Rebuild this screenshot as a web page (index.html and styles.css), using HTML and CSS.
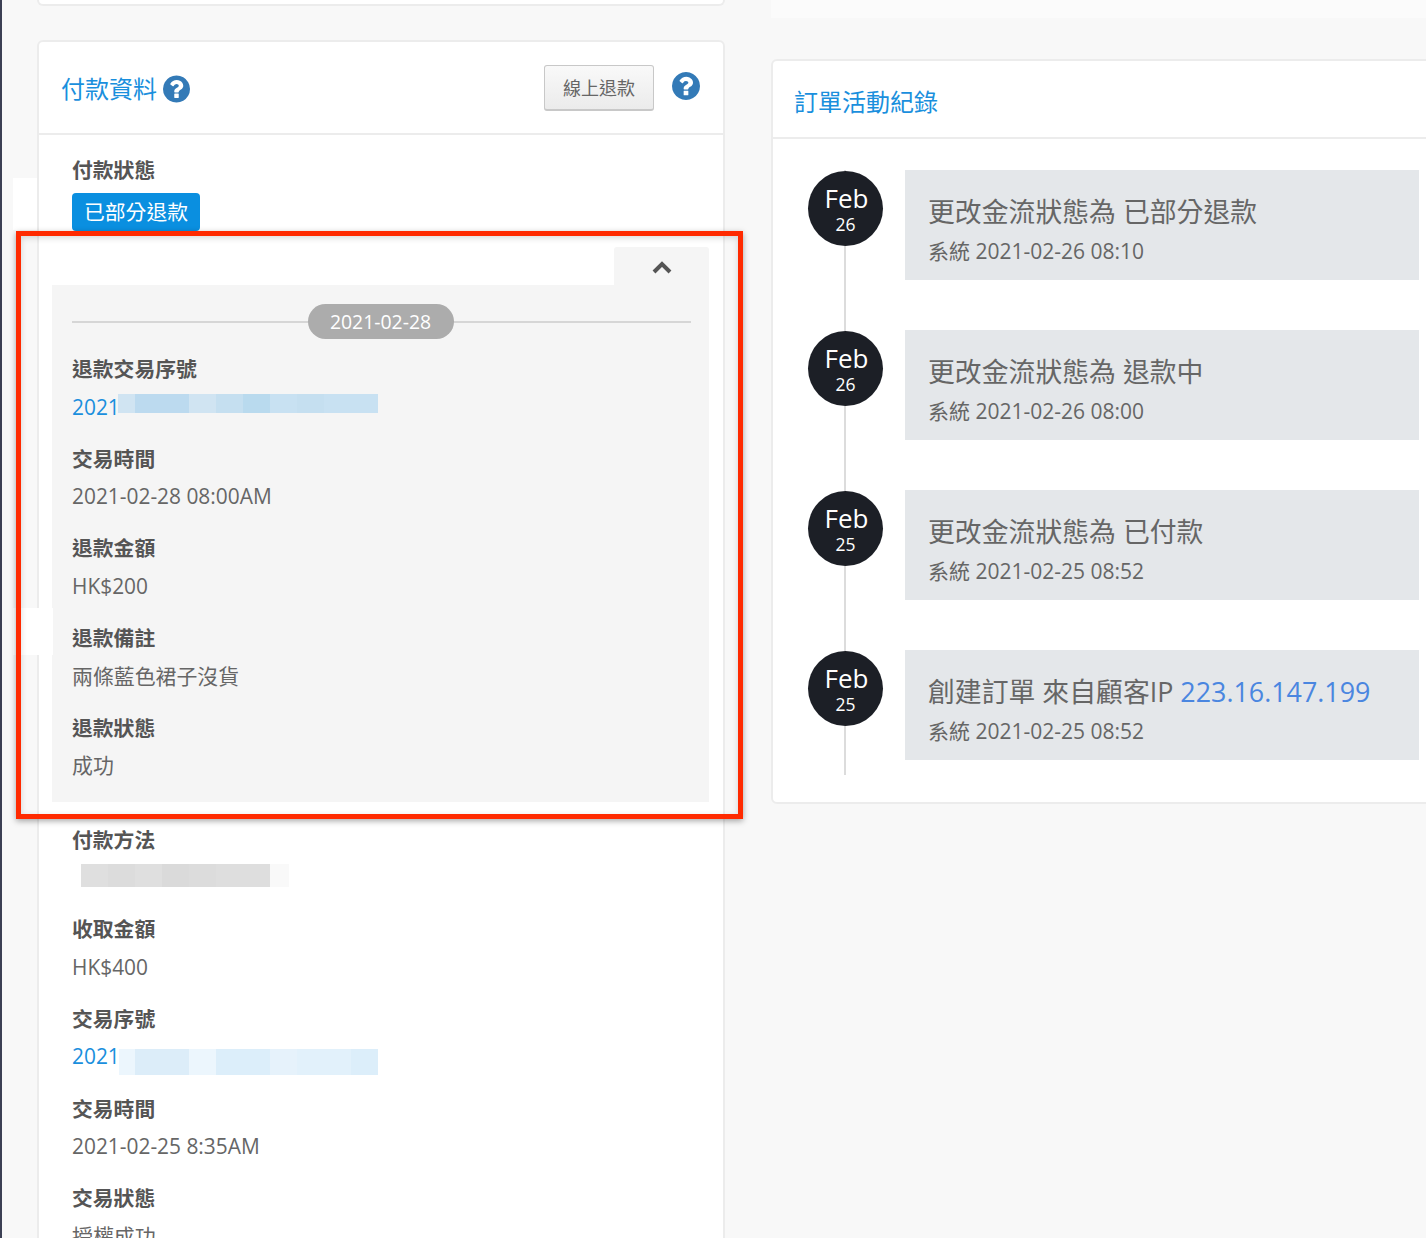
FILE: index.html
```html
<!DOCTYPE html>
<html lang="zh-Hant">
<head>
    <meta charset="UTF-8">
    <meta name="viewport" content="width=device-width, initial-scale=1.0">
    <title>訂單詳情</title>
    <link rel="stylesheet" href="styles.css">
</head>
<body>
    <div class="page">
        <div class="col-left">
            <div class="stub-left"></div>
            <div class="card">
                <div class="card-head">
                    <div class="head-title">
                        <h2>付款資料</h2>
                        <svg class="help help-small" viewBox="128 128 1536 1536"><path d="M1024 1376v-192q0-14-9-23t-23-9h-192q-14 0-23 9t-9 23v192q0 14 9 23t23 9h192q14 0 23-9t9-23zm256-672q0-88-55.5-163t-138.5-116-170-41q-243 0-371 213-15 24 8 42l132 100q7 6 19 6 16 0 25-12 53-68 86-92 34-24 86-24 48 0 85.5 26t37.5 59q0 38-20 61t-68 45q-63 28-115.5 86.5t-52.5 125.5v36q0 14 9 23t23 9h192q14 0 23-9t9-23q0-19 21.5-49.5t54.5-49.5q32-18 49-28.5t46-35 44.5-48 28-60.5 12.5-81zm384 192q0 209-103 385.5t-279.5 279.5-385.5 103-385.5-103-279.5-279.5-103-385.5 103-385.5 279.5-279.5 385.5-103 385.5 103 279.5 279.5 103 385.5z"/></svg>
                    </div>
                    <button class="btn-refund">線上退款</button>
                    <svg class="help help-top" viewBox="128 128 1536 1536"><path d="M1024 1376v-192q0-14-9-23t-23-9h-192q-14 0-23 9t-9 23v192q0 14 9 23t23 9h192q14 0 23-9t9-23zm256-672q0-88-55.5-163t-138.5-116-170-41q-243 0-371 213-15 24 8 42l132 100q7 6 19 6 16 0 25-12 53-68 86-92 34-24 86-24 48 0 85.5 26t37.5 59q0 38-20 61t-68 45q-63 28-115.5 86.5t-52.5 125.5v36q0 14 9 23t23 9h192q14 0 23-9t9-23q0-19 21.5-49.5t54.5-49.5q32-18 49-28.5t46-35 44.5-48 28-60.5 12.5-81zm384 192q0 209-103 385.5t-279.5 279.5-385.5 103-385.5-103-279.5-279.5-103-385.5 103-385.5 279.5-279.5 385.5-103 385.5 103 279.5 279.5 103 385.5z"/></svg>
                </div>
                <div class="card-body">
                    <div class="status">
                        <div class="label">付款狀態</div>
                        <span class="badge">已部分退款</span>
                    </div>

                    <div class="refund-tab">
                        <svg class="chevron" viewBox="0 0 20 13"><polyline points="2,11 10,3 18,11"/></svg>
                    </div>
                    <div class="refund-panel">
                        <div class="date-line"><span class="date-pill">2021-02-28</span></div>
                        <div class="field">
                            <div class="label">退款交易序號</div>
                            <div class="value link">2021<span class="mosaic mosaic-refund"><i class="c1"></i><i class="c2"></i><i class="c2"></i><i class="c1"></i><i class="c3"></i><i class="c4"></i><i class="c5"></i><i class="c3"></i><i class="c5"></i><i class="c5"></i></span></div>
                        </div>
                        <div class="field">
                            <div class="label">交易時間</div>
                            <div class="value">2021-02-28 08:00AM</div>
                        </div>
                        <div class="field">
                            <div class="label">退款金額</div>
                            <div class="value">HK$200</div>
                        </div>
                        <div class="field">
                            <div class="label">退款備註</div>
                            <div class="value">兩條藍色裙子沒貨</div>
                        </div>
                        <div class="field">
                            <div class="label">退款狀態</div>
                            <div class="value">成功</div>
                        </div>
                    </div>

                    <div class="field">
                        <div class="label">付款方法</div>
                        <div class="value"><span class="mosaic mosaic-method"><i class="g1"></i><i class="g2"></i><i class="g1"></i><i class="g3"></i><i class="g2"></i><i class="g4"></i><i class="g5"></i></span></div>
                    </div>
                    <div class="field">
                        <div class="label">收取金額</div>
                        <div class="value">HK$400</div>
                    </div>
                    <div class="field">
                        <div class="label">交易序號</div>
                        <div class="value link">2021<span class="mosaic mosaic-trade"><i class="l1"></i><i class="l2"></i><i class="l2"></i><i class="l1"></i><i class="l3"></i><i class="l3"></i><i class="l4"></i><i class="l5"></i><i class="l5"></i><i class="l3"></i></span></div>
                    </div>
                    <div class="field">
                        <div class="label">交易時間</div>
                        <div class="value">2021-02-25 8:35AM</div>
                    </div>
                    <div class="field">
                        <div class="label">交易狀態</div>
                        <div class="value">授權成功</div>
                    </div>
                </div>
            </div>
        </div>

        <div class="col-right">
            <div class="stub-right"></div>
            <div class="card card-log">
                <div class="log-head"><h2>訂單活動紀錄</h2></div>
                <div class="timeline">
                    <div class="event">
                        <div class="event-date"><span class="month">Feb</span><span class="day">26</span></div>
                        <div class="event-box">
                            <div class="event-title">更改金流狀態為 已部分退款</div>
                            <div class="event-meta">系統 2021-02-26 08:10</div>
                        </div>
                    </div>
                    <div class="event">
                        <div class="event-date"><span class="month">Feb</span><span class="day">26</span></div>
                        <div class="event-box">
                            <div class="event-title">更改金流狀態為 退款中</div>
                            <div class="event-meta">系統 2021-02-26 08:00</div>
                        </div>
                    </div>
                    <div class="event">
                        <div class="event-date"><span class="month">Feb</span><span class="day">25</span></div>
                        <div class="event-box">
                            <div class="event-title">更改金流狀態為 已付款</div>
                            <div class="event-meta">系統 2021-02-25 08:52</div>
                        </div>
                    </div>
                    <div class="event">
                        <div class="event-date"><span class="month">Feb</span><span class="day">25</span></div>
                        <div class="event-box">
                            <div class="event-title">創建訂單 來自顧客IP <a class="ip">223.16.147.199</a></div>
                            <div class="event-meta">系統 2021-02-25 08:52</div>
                        </div>
                    </div>
                </div>
            </div>
        </div>

        <!-- marks drawn on top of the screenshot -->
        <div class="patch patch-a"></div>
        <div class="patch patch-b"></div>
        <div class="red-frame"></div>
    </div>
</body>
</html>
```

FILE: styles.css
```css
* {
    box-sizing: border-box;
}

body {
    margin: 0;
    font-family: "Open Sans", "Noto Sans CJK TC", sans-serif;
    color: #666;
    background-color: #f8f8f8;
}

.page {
    position: relative;
    display: flex;
    height: 1238px;
    overflow: hidden;
    border-left: 2px solid #3c4054;
}

.col-left {
    width: 688px;
    margin-left: 35px;
    flex-shrink: 0;
}

.col-right {
    flex: 1;
    min-width: 0;
    margin-left: 46px;
}

.stub-left {
    height: 6px;
    margin-bottom: 34px;
    background-color: white;
    border: 2px solid #ececec;
    border-top: none;
    border-radius: 0 0 6px 6px;
}

.stub-right {
    height: 18px;
    margin-bottom: 41px;
    background-color: #fbfbfb;
}

.card {
    background-color: white;
    border: 2px solid #ececec;
    border-radius: 6px;
}

.card-log {
    margin-right: -8px;
}

/* payment card */
.card-head {
    display: flex;
    align-items: center;
    height: 93px;
    padding: 0 23px 0 22px;
    border-bottom: 2px solid #ececec;
}

.head-title {
    display: flex;
    align-items: center;
    flex: 1;
    padding-top: 3px;
}

h2 {
    margin: 0;
    font-size: 24px;
    font-weight: 400;
    line-height: 32px;
    color: #1a8fdd;
}

.help {
    fill: #337ab7;
}

.help-small {
    width: 27px;
    height: 28px;
    margin-left: 6px;
}

.help-top {
    width: 28px;
    height: 28px;
    margin: 0 0 4px 18px;
}

.btn-refund {
    width: 110px;
    height: 46px;
    margin-bottom: -1px;
    padding: 0 0 2px;
    font-family: inherit;
    font-size: 18px;
    color: #666;
    background: linear-gradient(#f9f9f9, #ebebeb);
    border: 1px solid #c8c8c8;
    border-bottom-width: 2px;
    border-radius: 3px;
}

.card-body {
    padding: 20px 14px 0 33px;
}

.label {
    font-size: 20.8px;
    font-weight: 700;
    line-height: 30px;
    color: #555;
}

.status .label {
    margin-bottom: 8px;
}

.badge {
    display: block;
    width: 128px;
    height: 38px;
    font-size: 20.8px;
    line-height: 38px;
    text-align: center;
    color: white;
    background-color: #0a8fe0;
    border-radius: 4px;
}

.field {
    height: 89.7px;
}

.value {
    display: flex;
    margin-top: 7.5px;
    font-size: 20.9px;
    line-height: 30px;
    color: #666;
}

.link {
    color: #1a8fdd;
}

/* refund panel */
.refund-tab {
    display: flex;
    justify-content: center;
    width: 95px;
    height: 38px;
    margin: 16px 0 0 542px;
    padding-top: 14px;
    background-color: #f5f5f5;
    border-radius: 3px 3px 0 0;
}

.chevron {
    width: 20px;
    height: 13px;
    fill: none;
    stroke: #555;
    stroke-width: 4;
}

.refund-panel {
    width: 657px;
    height: 517px;
    margin: 0 0 22.5px -20px;
    padding: 19px 18px 0 20px;
    background-color: #f5f5f5;
}

.date-line {
    display: flex;
    justify-content: center;
    margin-bottom: 15px;
    background: linear-gradient(#d6d6d6, #d6d6d6) center / 100% 2px no-repeat;
}

.date-pill {
    width: 146px;
    height: 35px;
    margin-right: 2px;
    font-size: 19.4px;
    line-height: 35px;
    text-align: center;
    color: white;
    background-color: #acacac;
    border-radius: 18px;
}

/* pixelated parts of the screenshot */
.mosaic {
    display: flex;
}

.mosaic i {
    display: block;
    width: 27px;
}

.mosaic-refund {
    height: 19px;
    margin: 2.5px 0 0 -2px;
}

.mosaic-refund i:first-child {
    width: 17px;
}

.mosaic-trade {
    height: 26px;
    margin: 7.5px 0 0 -1px;
}

.mosaic-trade i:first-child {
    width: 16px;
}

.mosaic-method {
    height: 23px;
    margin: 1.5px 0 0 9px;
}

.mosaic-method .g4 {
    width: 54px;
}

.mosaic-method .g5 {
    width: 19px;
}

.c1 { background-color: #d0e4f2; }
.c2 { background-color: #bcdaef; }
.c3 { background-color: #c5dff0; }
.c4 { background-color: #b9daee; }
.c5 { background-color: #c8e1f2; }

.l1 { background-color: #ecf6fd; }
.l2 { background-color: #dcedf9; }
.l3 { background-color: #dceefa; }
.l4 { background-color: #e6f2fb; }
.l5 { background-color: #e2f1fb; }

.g1 { background-color: #dfdfdf; }
.g2 { background-color: #dcdcdc; }
.g3 { background-color: #dadada; }
.g4 { background-color: #dedede; }
.g5 { background-color: #f9f9f9; }

/* activity log */
.log-head {
    display: flex;
    align-items: center;
    height: 78px;
    padding: 5px 0 0 21px;
    border-bottom: 2px solid #ececec;
}

.timeline {
    position: relative;
    display: flex;
    flex-direction: column;
    gap: 50px;
    padding: 31px 0 42px 35px;
}

.timeline::before {
    content: "";
    position: absolute;
    left: 71px;
    top: 31px;
    bottom: 27px;
    width: 2px;
    background-color: #dcdcdc;
}

.event {
    position: relative;
    display: flex;
    gap: 22px;
}

.event-date {
    display: flex;
    flex-direction: column;
    align-items: center;
    flex-shrink: 0;
    width: 75px;
    height: 75px;
    margin-top: 1px;
    padding-top: 11px;
    color: white;
    background-color: #1c1f26;
    border-radius: 50%;
}

.month {
    padding-left: 2px;
    font-size: 26px;
    line-height: 32px;
}

.day {
    font-size: 17.5px;
    line-height: 20px;
}

.event-box {
    width: 514px;
    height: 110px;
    padding: 24px 23px 0;
    background-color: #e4e7ea;
}

.event-title {
    font-size: 26.85px;
    line-height: 36px;
    color: #666;
}

.ip {
    color: #4a86e0;
}

.event-meta {
    margin-top: 6px;
    font-size: 21px;
    line-height: 30px;
    color: #666;
}

/* annotation marks */
.patch {
    position: absolute;
    background-color: white;
}

.patch-a {
    left: 11px;
    top: 178px;
    width: 24px;
    height: 52px;
}

.patch-b {
    left: 11px;
    top: 608px;
    width: 40px;
    height: 47px;
}

.red-frame {
    position: absolute;
    left: 14px;
    top: 231px;
    width: 727px;
    height: 588px;
    border: 5px solid #ff2a00;
    box-shadow: 0 2px 6px rgba(0, 0, 0, 0.35), inset 0 2px 6px rgba(0, 0, 0, 0.15);
}
```
